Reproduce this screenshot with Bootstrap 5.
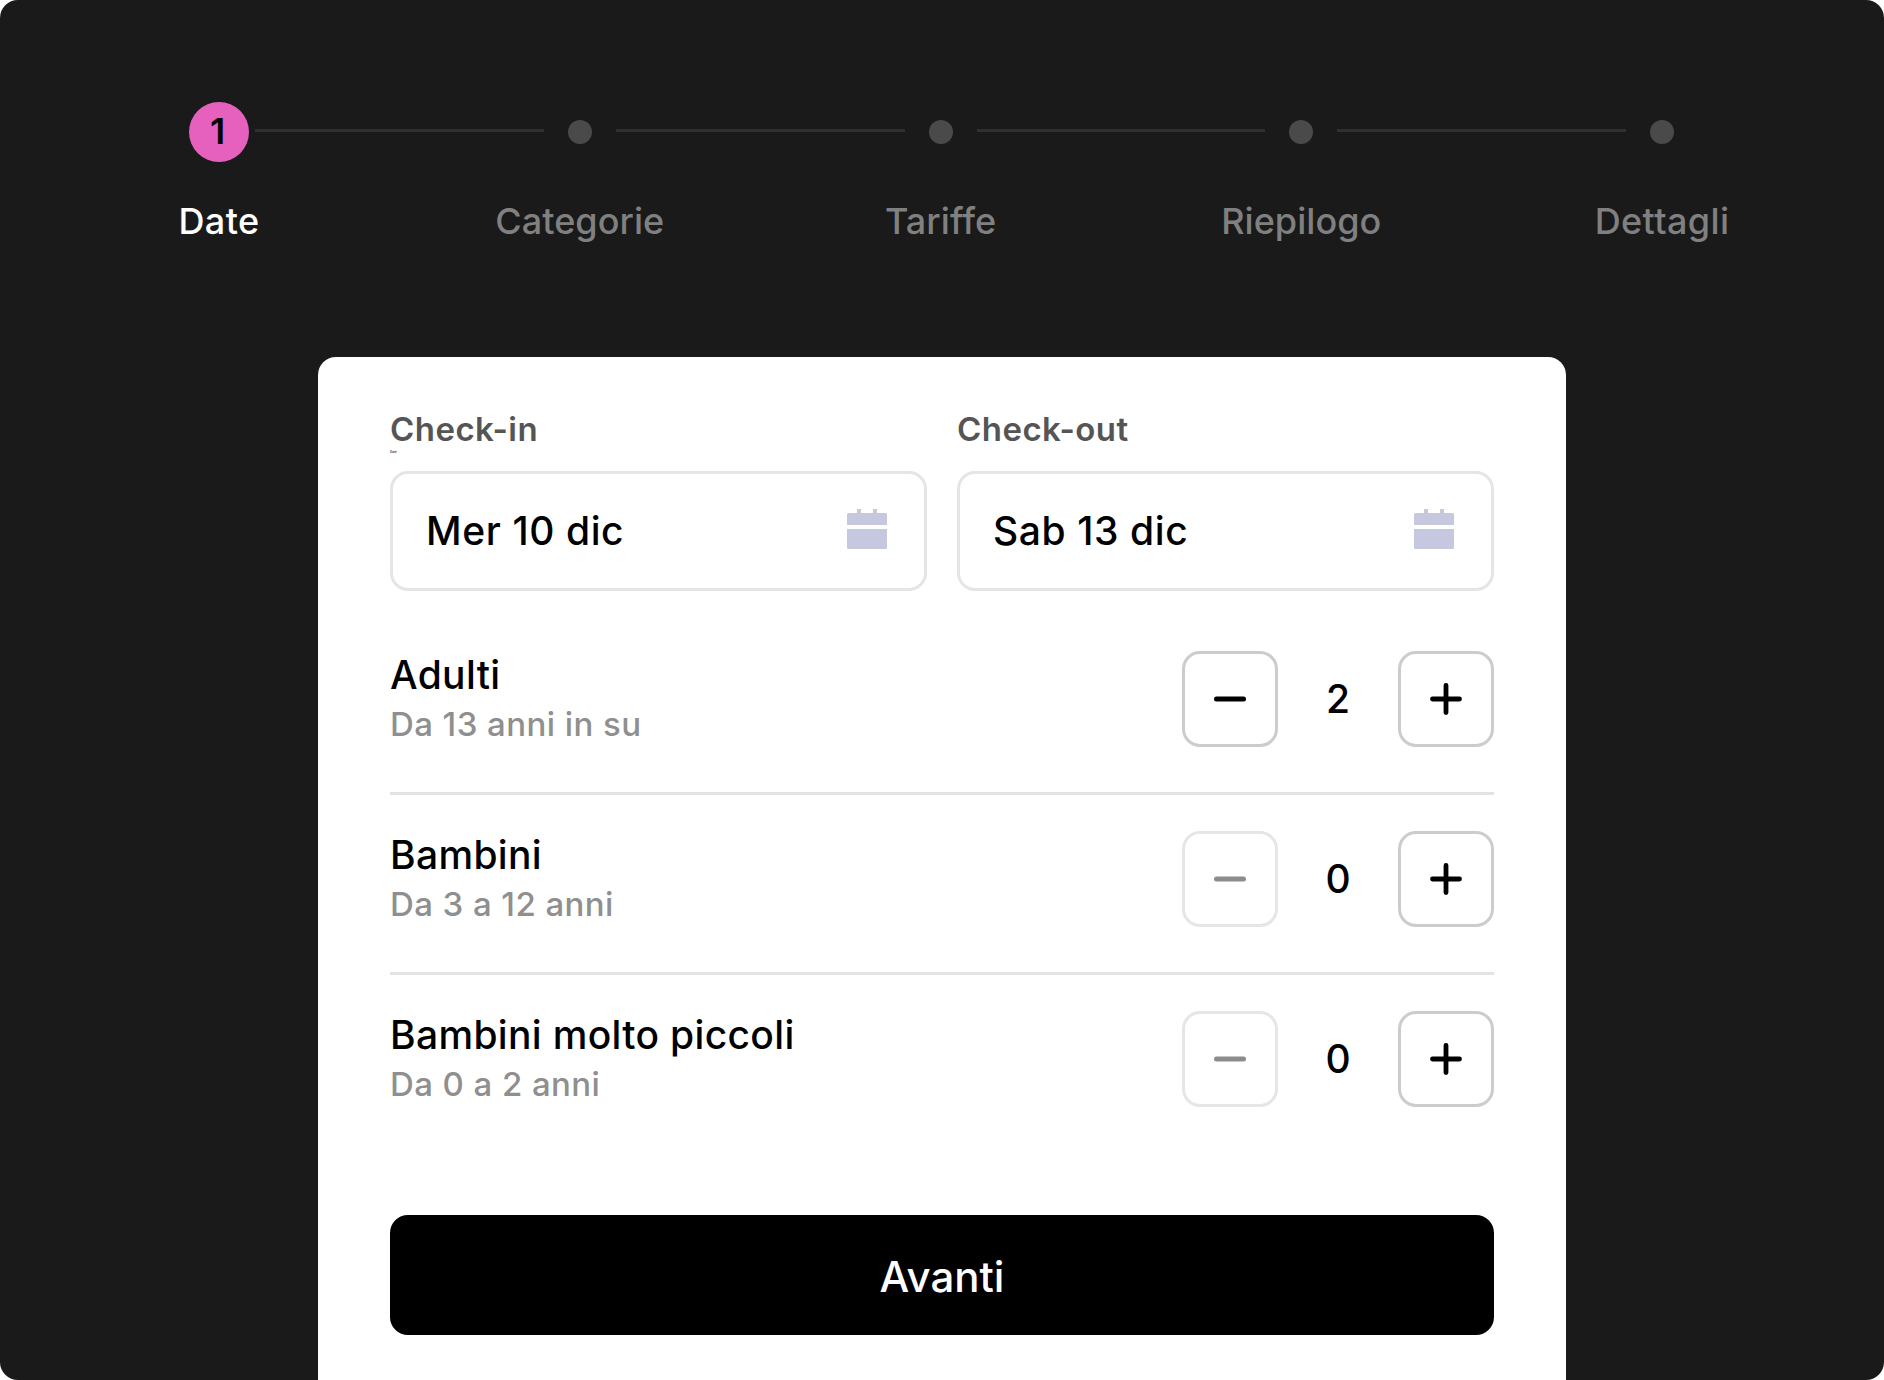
<!DOCTYPE html>
<html lang="it">
<head>
<meta charset="utf-8">
<meta name="viewport" content="width=device-width, initial-scale=1">
<title>Prenotazione</title>
<link href="https://cdn.jsdelivr.net/npm/bootstrap@5.3.0/dist/css/bootstrap.min.css" rel="stylesheet">
<style>
body{font-family:Inter,"Liberation Sans",sans-serif;background:#fff;color:#000;font-weight:500}
.booking{height:1380px;background:#1a1a1a;border-radius:18px;overflow:hidden;padding-top:102px}
.stepper{width:1515px;margin-left:183px;height:255px}
.step-item{width:72px;white-space:nowrap}
.step-marker{height:60px}
.step-num{width:60px;height:60px;background:#e660be;color:#000;font-size:36px;font-weight:600;line-height:59px;padding-right:3px}
.step-dot{width:24px;height:24px;background:#4a4a4a}
.step-label{font-size:36px;line-height:44px;margin-top:37px;color:#808080;letter-spacing:.05px}
.step-label.text-white,.step-item:last-child .step-label{letter-spacing:.38px}
.step-line{height:3px;background:#303030;margin-top:27px}
.panel{width:1248px;height:1023px;border-radius:18px 18px 0 0;padding:51px 72px 0}
.field-label{font-size:33px;line-height:42px;font-weight:600;color:#555;letter-spacing:.45px;height:63px}
.tiny-note{font-size:3px;line-height:3px;padding-top:1px;font-weight:600;letter-spacing:0;color:#333}
.date-field{height:120px;border:3px solid #e5e5e5;border-radius:18px;padding:0 37px 0 33px;font-size:39px;letter-spacing:.6px}
.date-field svg{margin-bottom:4px}
.guest-list{padding-top:21px}
.guest-row{height:180px;padding-top:36px;border-bottom:3px solid #e3e3e3}
.guest-row:first-child{height:183px;padding-top:39px}
.guest-row:last-child{border-bottom:0;height:240px}
.guest-name{font-size:39px;line-height:48px;letter-spacing:.33px}
.guest-age{font-size:33px;line-height:42px;margin-top:4px;color:#8f8f8f;letter-spacing:.42px}
.count{width:120px;font-size:39px}
.btn.step-btn{width:96px;height:96px;border:3px solid #ccc;border-radius:18px;color:#000;background:#fff}
.btn.step-btn:disabled{border-color:#e6e6e6;color:#8c8c8c;opacity:1}
.btn.next-btn{height:120px;background:#000;color:#fff;border:0;border-radius:18px;font-size:42px;font-weight:500;letter-spacing:0;padding:8px 0 6px}
</style>
<script src="https://cdn.jsdelivr.net/npm/bootstrap@5.3.0/dist/js/bootstrap.bundle.min.js"></script>
</head>
<body>
<svg class="d-none">
<symbol id="cal" viewBox="0 0 40 40"><path fill="#c5c8df" d="M1.500 4H10V0h4v4h12V0h4v4h8.500Q40 4 40 5.500V16H0V5.500Q0 4 1.500 4zM0 20h40v18.500Q40 40 38.500 40h-37Q0 40 0 38.500z"/></symbol>
<symbol id="minus" viewBox="0 0 32 32"><path d="M2.500 16h27" stroke="currentColor" stroke-width="5" stroke-linecap="round"/></symbol>
<symbol id="plus" viewBox="0 0 32 32"><path d="M2.500 16h27M16 2.500v27" stroke="currentColor" stroke-width="4.800" stroke-linecap="round"/></symbol>
</svg>
<main class="booking">
  <div class="stepper d-flex">
    <div class="step-item d-flex flex-column align-items-center"><div class="step-marker d-flex align-items-center"><span class="step-num rounded-circle text-center">1</span></div><div class="step-label text-white">Date</div></div>
    <div class="step-line flex-fill"></div>
    <div class="step-item d-flex flex-column align-items-center"><div class="step-marker d-flex align-items-center"><span class="step-dot rounded-circle"></span></div><div class="step-label">Categorie</div></div>
    <div class="step-line flex-fill"></div>
    <div class="step-item d-flex flex-column align-items-center"><div class="step-marker d-flex align-items-center"><span class="step-dot rounded-circle"></span></div><div class="step-label">Tariffe</div></div>
    <div class="step-line flex-fill"></div>
    <div class="step-item d-flex flex-column align-items-center"><div class="step-marker d-flex align-items-center"><span class="step-dot rounded-circle"></span></div><div class="step-label">Riepilogo</div></div>
    <div class="step-line flex-fill"></div>
    <div class="step-item d-flex flex-column align-items-center"><div class="step-marker d-flex align-items-center"><span class="step-dot rounded-circle"></span></div><div class="step-label">Dettagli</div></div>
  </div>
  <section class="panel bg-white mx-auto">
    <div class="d-flex" style="gap:30px">
      <div class="flex-fill w-50">
        <div class="field-label">Check-in<div class="tiny-note">Date</div></div>
        <div class="date-field d-flex align-items-center justify-content-between"><span>Mer 10 dic</span><svg width="40" height="40"><use href="#cal"/></svg></div>
      </div>
      <div class="flex-fill w-50">
        <div class="field-label">Check-out</div>
        <div class="date-field d-flex align-items-center justify-content-between"><span>Sab 13 dic</span><svg width="40" height="40"><use href="#cal"/></svg></div>
      </div>
    </div>
    <div class="guest-list">
      <div class="guest-row d-flex justify-content-between align-items-start">
        <div><div class="guest-name">Adulti</div><div class="guest-age">Da 13 anni in su</div></div>
        <div class="d-flex align-items-center"><button class="btn step-btn p-0 d-flex align-items-center justify-content-center" aria-label="Meno"><svg width="32" height="32"><use href="#minus"/></svg></button><span class="count text-center">2</span><button class="btn step-btn p-0 d-flex align-items-center justify-content-center" aria-label="Più"><svg width="32" height="32"><use href="#plus"/></svg></button></div>
      </div>
      <div class="guest-row d-flex justify-content-between align-items-start">
        <div><div class="guest-name">Bambini</div><div class="guest-age">Da 3 a 12 anni</div></div>
        <div class="d-flex align-items-center"><button disabled class="btn step-btn p-0 d-flex align-items-center justify-content-center" aria-label="Meno"><svg width="32" height="32"><use href="#minus"/></svg></button><span class="count text-center">0</span><button class="btn step-btn p-0 d-flex align-items-center justify-content-center" aria-label="Più"><svg width="32" height="32"><use href="#plus"/></svg></button></div>
      </div>
      <div class="guest-row d-flex justify-content-between align-items-start">
        <div><div class="guest-name">Bambini molto piccoli</div><div class="guest-age">Da 0 a 2 anni</div></div>
        <div class="d-flex align-items-center"><button disabled class="btn step-btn p-0 d-flex align-items-center justify-content-center" aria-label="Meno"><svg width="32" height="32"><use href="#minus"/></svg></button><span class="count text-center">0</span><button class="btn step-btn p-0 d-flex align-items-center justify-content-center" aria-label="Più"><svg width="32" height="32"><use href="#plus"/></svg></button></div>
      </div>
    </div>
    <button class="btn next-btn w-100">Avanti</button>
  </section>
</main>
</body>
</html>
